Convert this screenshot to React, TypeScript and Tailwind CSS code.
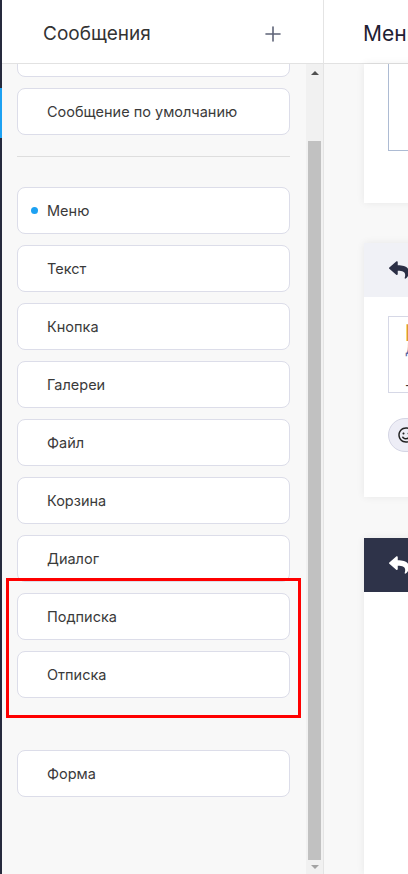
import { Plus } from "lucide-react";
import { FaReply, FaRegSmile } from "react-icons/fa";

const font = { fontFamily: "Inter, 'Noto Sans', sans-serif" };

interface MessageCardProps {
  label?: string;
  active?: boolean;
  className?: string;
}

const MessageCard = ({ label, active, className = "" }: MessageCardProps) => (
  <div
    className={`flex h-[47px] w-[273px] shrink-0 items-center rounded-lg border border-[#dcdde9] bg-white pl-[13px] ${className}`}
  >
    <span className="flex w-[7px] justify-center">
      {active && <span className="h-[7px] w-[7px] rounded-full bg-[#1da1f2]" />}
    </span>
    <span className="ml-[9px] text-[14.5px] text-[#3a3a3a]">{label}</span>
  </div>
);

const groups = ["Текст", "Кнопка", "Галереи", "Файл", "Корзина", "Диалог", "Подписка", "Отписка"];

export default function App() {
  return (
    <div className="relative flex h-[874px] w-[408px] overflow-hidden bg-white" style={font}>
      {/* dark nav strip */}
      <div className="flex w-[2px] shrink-0 flex-col bg-[#262a3d]">
        <div className="h-[88px]" />
        <div className="h-[50px] bg-[#1da1f2]" />
      </div>

      {/* messages sidebar */}
      <div className="flex w-[322px] shrink-0 flex-col border-r border-[#e4e4e4] bg-[#f8f8f8]">
        <div className="flex h-[64px] shrink-0 items-center justify-between border-b border-[#e2e2e2] bg-white pl-[41px] pr-[38px] pt-[5px]">
          <span className="text-[19px] text-[#333]">Сообщения</span>
          <Plus className="h-[24px] w-[24px] text-[#5e6377]" strokeWidth={1.6} />
        </div>

        <div className="flex flex-1 overflow-hidden">
          <div className="flex flex-1 flex-col pl-[15px]">
            <div className="flex flex-col gap-[11px]">
              <MessageCard className="-mt-[34px]" />
              <MessageCard label="Сообщение по умолчанию" />
            </div>
            <div className="mt-[21px] h-px w-[273px] bg-[#dedede]" />
            <div className="mt-[30px] flex flex-col gap-[11px]">
              <MessageCard label="Меню" active />
              {groups.map((g) => (
                <MessageCard key={g} label={g} />
              ))}
            </div>
            <MessageCard label="Форма" className="mt-[52px]" />
          </div>

          {/* scrollbar */}
          <div className="flex w-[17px] shrink-0 flex-col items-center bg-[#f1f1f1]">
            <div className="flex h-[17px] items-center justify-center">
              <div className="h-0 w-0 border-x-[4px] border-b-[4px] border-x-transparent border-b-[#505050]" />
            </div>
            <div className="mt-[60px] h-[719px] w-[13px] bg-[#c1c1c1]" />
            <div className="flex flex-1 items-center justify-center">
              <div className="h-0 w-0 border-x-[4px] border-t-[4px] border-x-transparent border-t-[#a3a3a3]" />
            </div>
          </div>
        </div>
      </div>

      {/* editor area */}
      <div className="flex min-w-0 flex-1 flex-col bg-[#f8f8f8]">
        <div className="flex h-[64px] shrink-0 items-center overflow-hidden whitespace-nowrap border-b border-[#e2e2e2] bg-white pl-[39px] pt-[5px]">
          <span className="text-[21px] text-[#1f2133]">Меню</span>
        </div>

        <div className="flex flex-1 flex-col pl-[40px]">
          <div className="h-[139px] w-[400px] shrink-0 bg-white shadow-[0_0_8px_rgba(0,0,0,0.07)]">
            <div className="ml-[24px] h-[87px] w-[300px] border-x border-b border-[#adbbd3]" />
          </div>

          <div className="mt-[40px] w-[400px] shrink-0 bg-white pb-[45px] shadow-[0_0_8px_rgba(0,0,0,0.07)]">
            <div className="flex h-[54px] items-center bg-[#f0f1f6] pl-[25px]">
              <FaReply className="h-[20px] w-[20px] text-[#2b2f45]" />
            </div>
            <div className="ml-[24px] mt-[19px] flex h-[77px] w-[300px] flex-col border border-[#d6d8e6] pl-[16px] pt-[8px] text-[14px] leading-[16px]">
              <span className="font-semibold text-[#d8962c]">|</span>
              <span className="text-[#5a6aa8]">Д</span>
              <span className="mt-[20px] text-[#333]">-</span>
            </div>
            <div className="ml-[24px] mt-[25px] flex h-[34px] w-[70px] items-center rounded-full border border-[#d4d5e4] bg-[#ededf6] pl-[9px]">
              <FaRegSmile className="h-[16px] w-[16px] text-[#222]" />
            </div>
          </div>

          <div className="mt-[41px] flex w-[400px] flex-1 flex-col bg-white shadow-[0_0_8px_rgba(0,0,0,0.07)]">
            <div className="flex h-[54px] items-center bg-[#2e3349] pl-[25px]">
              <FaReply className="h-[20px] w-[20px] text-white" />
            </div>
          </div>
        </div>
      </div>

      {/* annotation highlight */}
      <div className="pointer-events-none absolute left-[6px] top-[578px] h-[140px] w-[295px] border-[3px] border-[#ff0000]" />
    </div>
  );
}
